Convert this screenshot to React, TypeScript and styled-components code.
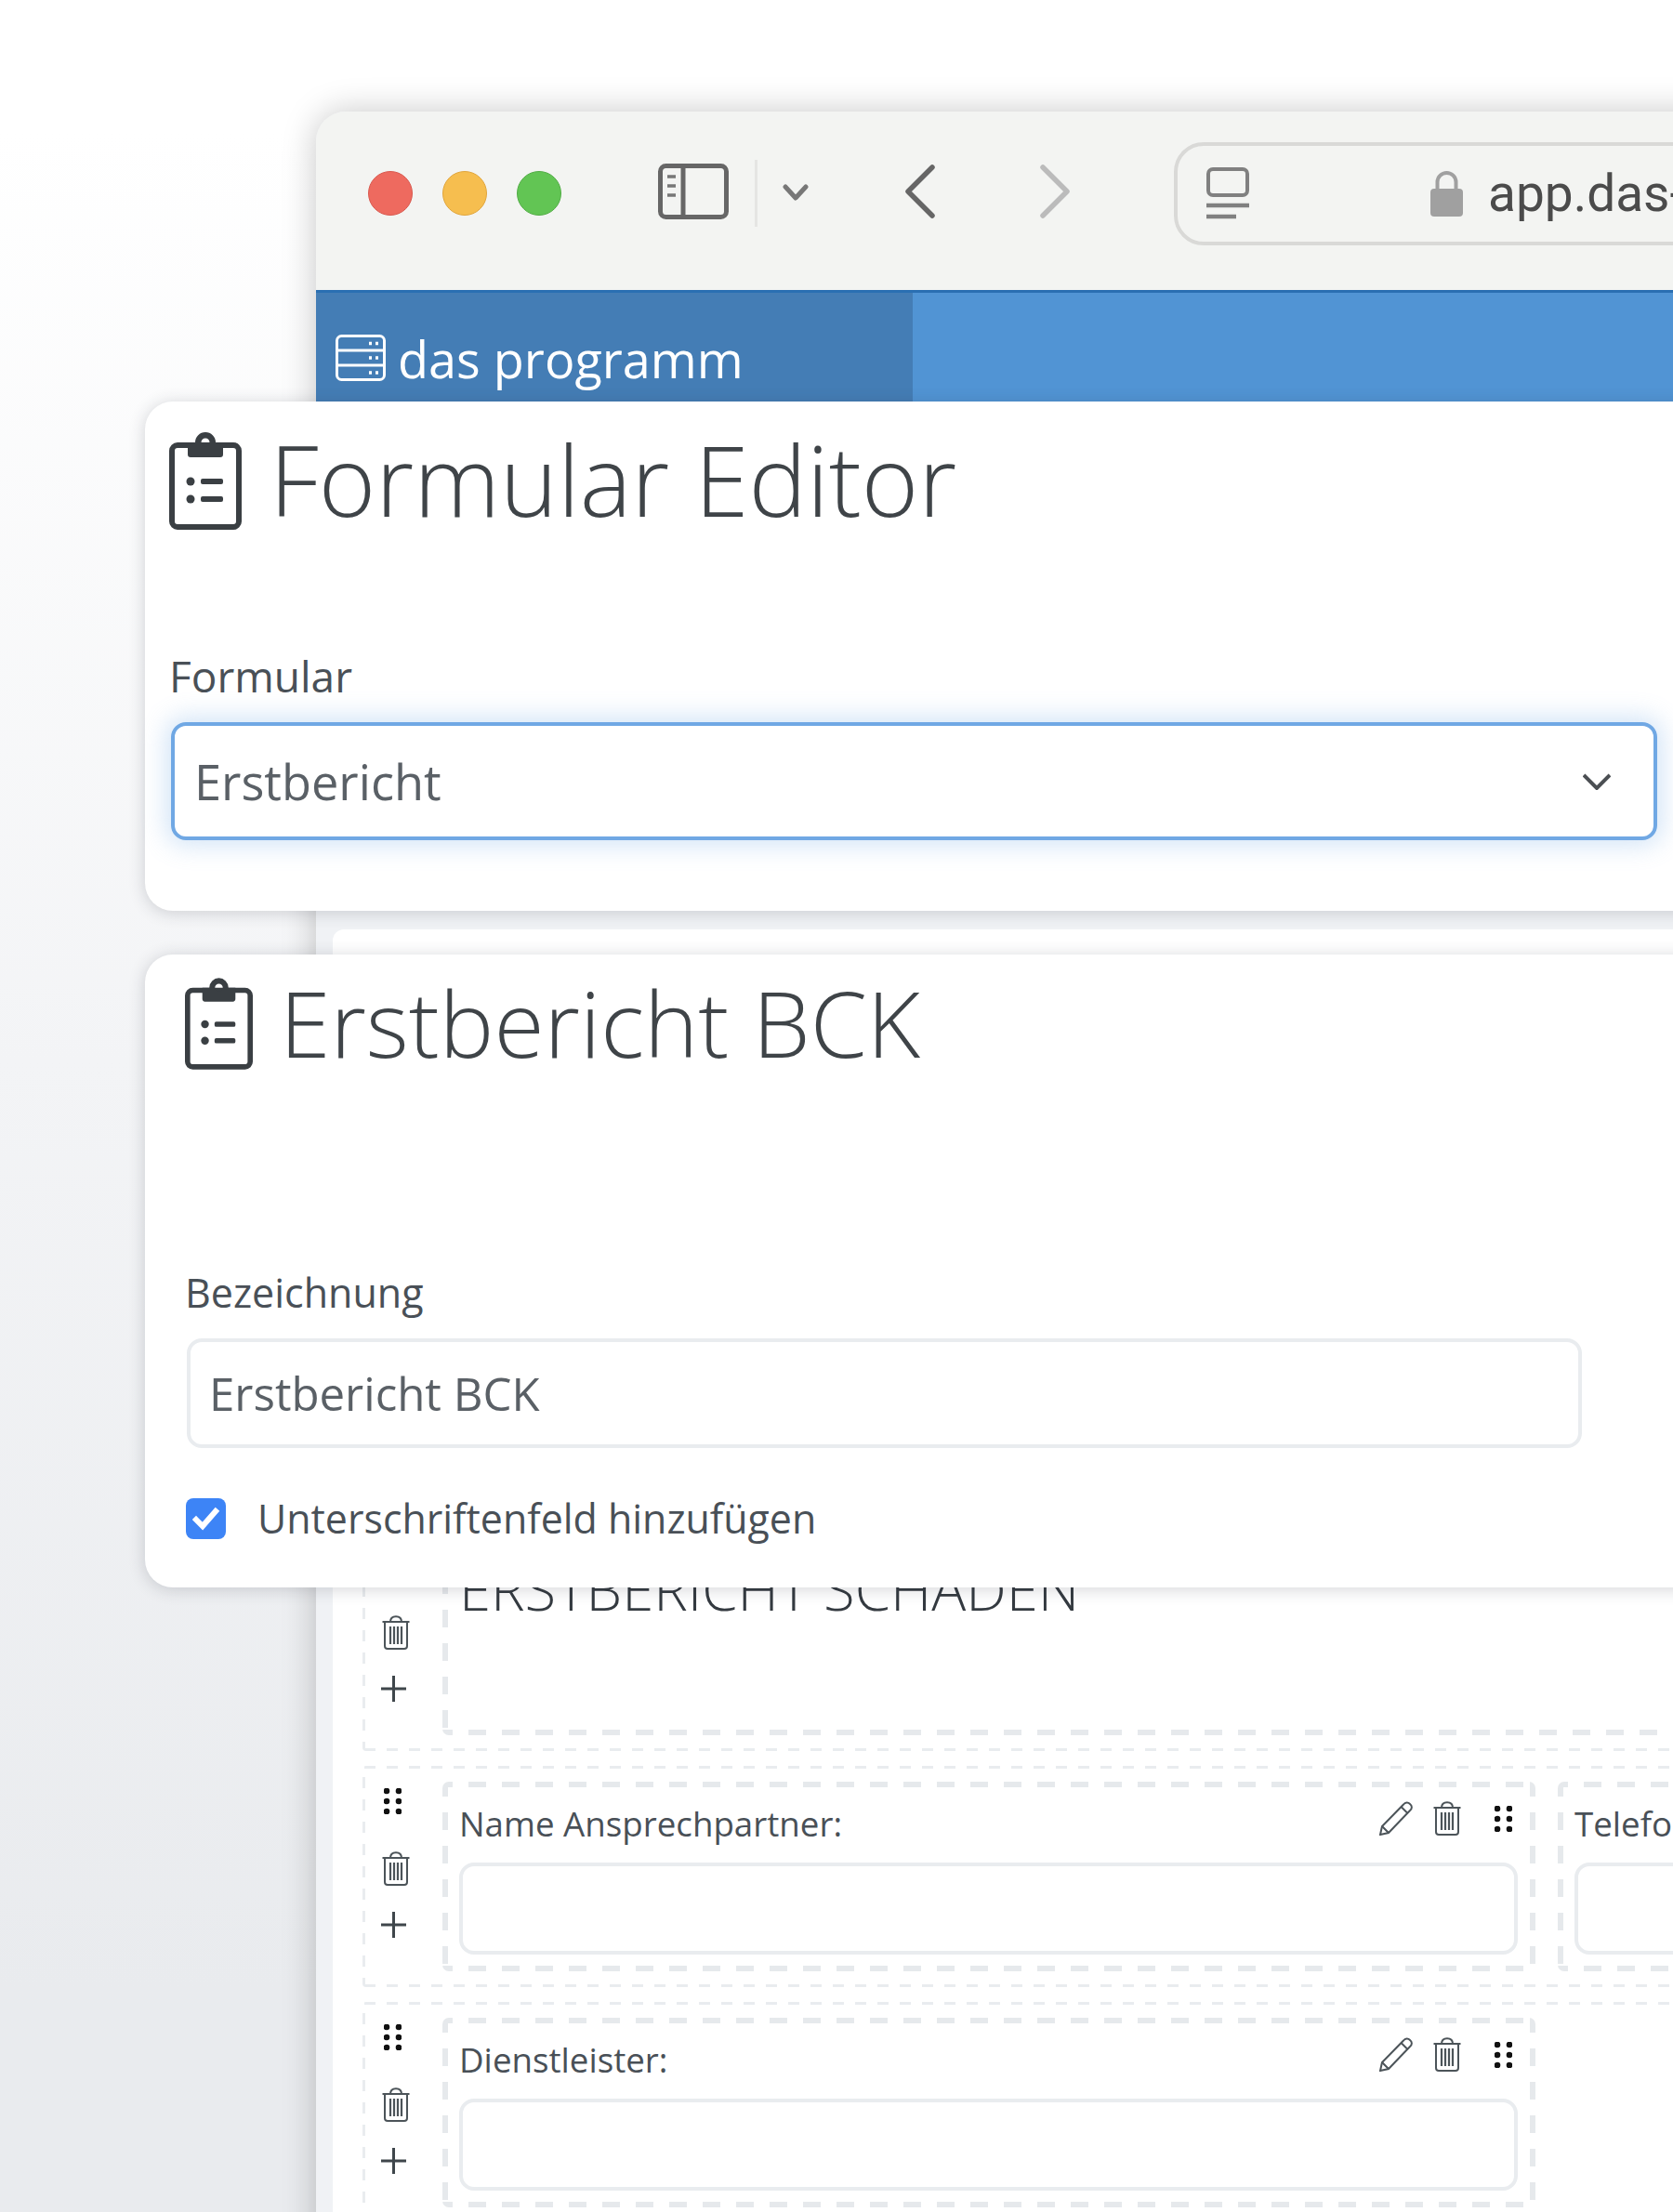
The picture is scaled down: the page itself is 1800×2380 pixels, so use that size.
import React from "react";
import styled, { createGlobalStyle } from "styled-components";

const Global = createGlobalStyle`
  html, body { margin: 0; padding: 0; background: #fff; }
  * { box-sizing: border-box; }
  body { font-family: "Open Sans", "Liberation Sans", sans-serif; }
`;

const dashes = (color: string, w: number, dash: number, period: number, offset: number) => `
  background-image:
    repeating-linear-gradient(90deg, ${color} 0 ${dash}px, transparent ${dash}px ${period}px),
    repeating-linear-gradient(90deg, ${color} 0 ${dash}px, transparent ${dash}px ${period}px),
    repeating-linear-gradient(0deg, ${color} 0 ${dash}px, transparent ${dash}px ${period}px),
    repeating-linear-gradient(0deg, ${color} 0 ${dash}px, transparent ${dash}px ${period}px);
  background-size: 100% ${w}px, 100% ${w}px, ${w}px 100%, ${w}px 100%;
  background-position: ${offset}px 0, ${offset}px 100%, 0 ${offset}px, 100% ${offset}px;
  background-repeat: no-repeat;
`;

const Stage = styled.div`
  position: relative;
  width: 1800px;
  height: 2380px;
  overflow: hidden;
  padding: 120px 0 0 340px;
  background: linear-gradient(180deg, #ffffff 0%, #ffffff 6%, #f3f4f6 48%, #e9ebee 90%, #e9ebee 100%);
`;

const Win = styled.div`
  width: 1600px;
  height: 2300px;
  border-radius: 32px 0 0 0;
  background: #f0f2f5;
  box-shadow: 0 0 36px rgba(0, 0, 0, 0.22);
  overflow: hidden;
`;

const Toolbar = styled.div`
  height: 192px;
  display: flex;
  align-items: center;
  padding: 0 0 16px 56px;
  background: #f3f4f2;
`;

const Lights = styled.div`
  display: flex;
  gap: 32px;
`;

const Light = styled.span<{ $c: string; $b: string }>`
  width: 48px;
  height: 48px;
  border-radius: 50%;
  background: ${(p) => p.$c};
  border: 1px solid ${(p) => p.$b};
`;

const ToolIcon = styled.svg<{ $ml: number; $mt?: number }>`
  flex: none;
  margin-left: ${(p) => p.$ml}px;
  margin-top: ${(p) => p.$mt ?? 0}px;
`;

const ToolDivider = styled.span`
  flex: none;
  width: 3px;
  height: 72px;
  margin-left: 28px;
  background: #e5e5e3;
`;

const Address = styled.div`
  flex: none;
  width: 900px;
  height: 111px;
  margin-left: 112px;
  padding-left: 31px;
  display: flex;
  align-items: center;
  border: 4px solid #d9d9d7;
  border-radius: 32px;
`;

const ReaderIcon = styled.svg`
  flex: none;
`;

const LockIcon = styled.svg`
  flex: none;
  margin-left: 195px;
`;

const UrlText = styled.span`
  margin-left: 27px;
  font-family: Roboto, "Liberation Sans", sans-serif;
  font-size: 55px;
  line-height: 60px;
  color: #4b4b4b;
  white-space: nowrap;
`;

const NavBar = styled.div`
  height: 120px;
  display: flex;
  background: #5194d4;
  border-top: 3px solid #2a6fb2;
`;

const Brand = styled.div`
  width: 642px;
  height: 100%;
  display: flex;
  align-items: flex-start;
  gap: 13px;
  padding: 45px 0 0 21px;
  background: #447db5;
`;

const ServerIcon = styled.svg`
  flex: none;
`;

const BrandText = styled.span`
  font-weight: 400;
  font-size: 54px;
  line-height: 62px;
  margin-top: -5px;
  color: #fff;
  white-space: nowrap;
`;

const Panel = styled.div`
  margin: 568px 0 0 18px;
  padding: 646px 0 0 32px;
  height: 1500px;
  background: #fff;
  border-radius: 12px 0 0 0;
  display: flex;
  flex-direction: column;
  gap: 16px;
`;

const Row = styled.div`
  height: 238px;
  display: flex;
  border-radius: 4px;
  ${dashes("#e9ecef", 3, 12, 24, 2)}
`;

const RowTools = styled.div`
  flex: none;
  width: 86px;
  padding: 24px 0 0 20px;
  display: flex;
  flex-direction: column;
  align-items: flex-start;
`;

const Grip = styled.svg<{ $ml?: number }>`
  flex: none;
  margin-left: ${(p) => p.$ml ?? 0}px;
`;

const RowTrash = styled.svg`
  margin: 40px 0 0 1px;
  flex: none;
`;

const RowPlus = styled.svg`
  margin-top: 28px;
  flex: none;
`;

const Fields = styled.div`
  display: flex;
  gap: 24px;
  padding-top: 17px;
`;

const Field = styled.div<{ $w: number }>`
  flex: none;
  width: ${(p) => p.$w}px;
  height: 204px;
  padding: 21px 19px 17px 18px;
  border-radius: 7px;
  ${dashes("#e6e9ec", 6, 19, 36, -8)}
`;

const FieldHead = styled.div`
  height: 37px;
  margin-bottom: 29px;
  display: flex;
  align-items: center;
`;

const FieldLabel = styled.span`
  flex: 1;
  font-size: 36.7px;
  line-height: 37px;
  margin-top: 11px;
  color: #495057;
  white-space: nowrap;
`;

const HeadIcon = styled.svg<{ $ml: number }>`
  flex: none;
  margin-left: ${(p) => p.$ml}px;
`;

const FieldPad = styled.span`
  flex: none;
  width: 6px;
`;

const Heading = styled.div`
  margin-top: -10px;
  font-weight: 300;
  font-size: 61.6px;
  line-height: 70px;
  color: #343a40;
  white-space: nowrap;
`;

const Box = styled.input`
  display: block;
  width: 100%;
  height: 99px;
  padding: 0 16px;
  border: 4px solid #e9ecef;
  border-radius: 16px;
  background: #fff;
  outline: none;
  font-family: inherit;
`;

const FloatCard = styled.section<{ $top: number; $h: number }>`
  position: absolute;
  left: 156px;
  top: ${(p) => p.$top}px;
  width: 1700px;
  height: ${(p) => p.$h}px;
  background: #fff;
  border-radius: 30px;
  box-shadow: 0 2px 18px rgba(40, 44, 60, 0.2);
`;

const CardTop = styled.header<{ $pl: number; $pt: number; $gap: number; $h: number }>`
  height: ${(p) => p.$h}px;
  padding: ${(p) => p.$pt}px 0 0 ${(p) => p.$pl}px;
  display: flex;
  align-items: flex-start;
  gap: ${(p) => p.$gap}px;
`;

const CardTitle = styled.h1<{ $size: number; $mt: number }>`
  margin: ${(p) => p.$mt}px 0 0;
  font-weight: 300;
  font-size: ${(p) => p.$size}px;
  line-height: 1.2;
  color: #3f4448;
  white-space: nowrap;
`;

const FormGroup = styled.div<{ $pl: number; $w: number }>`
  padding-left: ${(p) => p.$pl}px;
  width: ${(p) => p.$w}px;
`;

const Label = styled.label<{ $size: number; $mb: number }>`
  display: block;
  margin: -1px 0 ${(p) => p.$mb + 1}px -2px;
  font-size: ${(p) => p.$size}px;
  line-height: 60px;
  color: #495057;
`;

const SelectBox = styled.div`
  height: 127px;
  display: flex;
  align-items: center;
  justify-content: space-between;
  padding: 0 46px 0 21px;
  border: 4px solid #70a8e4;
  border-radius: 16px;
  font-size: 52.3px;
  color: #5a6066;
  box-shadow: 0 0 26px 6px rgba(112, 168, 228, 0.3);
`;

const TextInput = styled.input`
  display: block;
  width: 100%;
  height: 118px;
  padding: 0 20px 2px;
  border: 4px solid #e9ecef;
  border-radius: 16px;
  outline: none;
  background: #fff;
  font-family: inherit;
  font-size: 49.2px;
  color: #5a6066;
`;

const CheckRow = styled.div`
  margin: 54px 0 0 44px;
  display: flex;
  align-items: center;
  gap: 34px;
`;

const CheckMark = styled.span`
  flex: none;
  width: 43px;
  height: 44px;
  border-radius: 8px;
  background: #3d84f6;
  display: flex;
  align-items: center;
  justify-content: center;
`;

const CheckText = styled.span`
  font-size: 42.9px;
  line-height: 44px;
  color: #495057;
  white-space: nowrap;
`;

const ClipboardSvg = styled.svg`
  flex: none;
`;

const Clipboard = ({ w, h }: { w: number; h: number }) => (
  <ClipboardSvg width={w} height={h} viewBox="0 0 78 105" fill="none">
    <rect x="3" y="14" width="72" height="88" rx="6" stroke="#3a3f43" strokeWidth="6" />
    <path
      fillRule="evenodd"
      fill="#3a3f43"
      d="M20 11H28a11 11 0 0 1 22 0H58V24a3 3 0 0 1-3 3H23a3 3 0 0 1-3-3zM39 6.5a4.5 4.5 0 1 0 0 9 4.5 4.5 0 0 0 0-9z"
    />
    <circle cx="23" cy="53" r="4.5" fill="#3a3f43" />
    <circle cx="23" cy="72" r="4.5" fill="#3a3f43" />
    <rect x="34" y="50" width="24" height="6" rx="2" fill="#3a3f43" />
    <rect x="34" y="69" width="24" height="6" rx="2" fill="#3a3f43" />
  </ClipboardSvg>
);

const gripDots = [3, 14, 25].flatMap((y) =>
  [3, 16].map((x) => <circle key={`${x}-${y}`} cx={x} cy={y} r="3.3" />),
);

const trashParts = (
  <g fill="none" stroke="#4c5459" strokeWidth="2">
    <path d="M0.5 7H29.5" />
    <path d="M9 7C9 3 11 1.2 15 1.2S21 3 21 7" />
    <path d="M3 7V33C3 35 4 36 6 36H24C26 36 27 35 27 33V7" />
    <path d="M9 12V31M13 12V31M17 12V31M21 12V31" strokeWidth="2.2" />
  </g>
);

const Plus = () => (
  <RowPlus width="27" height="28" viewBox="0 0 27 28" fill="none" stroke="#3f464b" strokeWidth="3">
    <path d="M0 14H27M13.5 0V28" />
  </RowPlus>
);

const Tools = () => (
  <RowTools>
    <Grip $ml={3} width="19" height="28" viewBox="0 0 19 28" fill="#111">{gripDots}</Grip>
    <RowTrash width="30" height="37" viewBox="0 0 30 37">{trashParts}</RowTrash>
    <Plus />
  </RowTools>
);

const InputField = ({ label, w, noIcons }: { label: string; w: number; noIcons?: boolean }) => (
  <Field $w={w}>
    <FieldHead>
      <FieldLabel>{label}</FieldLabel>
      {!noIcons && (
        <>
          <HeadIcon $ml={0} width="36" height="37" viewBox="0 0 36 37" fill="none" stroke="#4c5459" strokeWidth="2">
            <path d="M1 36L3 27L26 3.5C28 1 31 1 33 3C35.5 5 35.5 8 33 10L10 34Z" />
            <path d="M23.5 6L30.5 13M3 27L10 34" />
          </HeadIcon>
          <HeadIcon $ml={22} width="30" height="37" viewBox="0 0 30 37">{trashParts}</HeadIcon>
          <HeadIcon $ml={36} width="19" height="28" viewBox="0 0 19 28" fill="#111">{gripDots}</HeadIcon>
          <FieldPad />
        </>
      )}
    </FieldHead>
    <Box readOnly aria-label={label} />
  </Field>
);

export default function App() {
  return (
    <Stage>
      <Global />
      <Win>
        <Toolbar>
          <Lights>
            <Light $c="#ee6a5f" $b="#d9594f" />
            <Light $c="#f6be4f" $b="#e0a53c" />
            <Light $c="#62c554" $b="#52ad46" />
          </Lights>
          <ToolIcon $ml={104} $mt={-4} width="76" height="60" viewBox="0 0 76 60" fill="none" stroke="#666" strokeWidth="5">
            <rect x="2.5" y="2.5" width="71" height="55" rx="6" />
            <path d="M27 2V58" />
            <path d="M10 14H19M10 24H19M10 34H19" strokeWidth="3.5" stroke="#777" />
          </ToolIcon>
          <ToolDivider />
          <ToolIcon $ml={27} $mt={-2} width="28" height="18" viewBox="0 0 28 18" fill="none" stroke="#777" strokeWidth="5" strokeLinecap="round" strokeLinejoin="round">
            <path d="M3 3L14 15L25 3" />
          </ToolIcon>
          <ToolIcon $ml={104} $mt={-5} width="32" height="58" viewBox="0 0 32 58" fill="none" stroke="#666" strokeWidth="5.5" strokeLinecap="round" strokeLinejoin="round">
            <path d="M29 3L3 29L29 55" />
          </ToolIcon>
          <ToolIcon $ml={113} $mt={-5} width="32" height="58" viewBox="0 0 32 58" fill="none" stroke="#bbb" strokeWidth="5.5" strokeLinecap="round" strokeLinejoin="round">
            <path d="M3 3L29 29L3 55" />
          </ToolIcon>
          <Address>
            <ReaderIcon width="46" height="56" viewBox="0 0 46 56" fill="none" stroke="#808080" strokeWidth="4">
              <rect x="2" y="2" width="42" height="28" rx="5" />
              <path d="M0 41H46" strokeWidth="4.5" />
              <path d="M0 53H32" strokeWidth="4.5" />
            </ReaderIcon>
            <LockIcon width="35" height="50" viewBox="0 0 35 50">
              <path d="M7.5 22V13a10 10 0 0 1 20 0v9" fill="none" stroke="#a0a0a0" strokeWidth="4" />
              <rect x="0" y="20" width="35" height="30" rx="4" fill="#a0a0a0" />
            </LockIcon>
            <UrlText>app.das-programm.de</UrlText>
          </Address>
        </Toolbar>
        <NavBar>
          <Brand>
            <ServerIcon width="54" height="50" viewBox="0 0 54 50" fill="none" stroke="#fff" strokeWidth="3">
              <rect x="1.5" y="1.5" width="51" height="47" rx="5" />
              <path d="M1.5 17H52.5M1.5 33H52.5" />
              <path d="M36 9.5H39M43 9.5H46M36 25H39M43 25H46M36 41H39M43 41H46" strokeWidth="3.4" />
            </ServerIcon>
            <BrandText>das programm</BrandText>
          </Brand>
        </NavBar>
        <Panel>
          <Row>
            <Tools />
            <Fields>
              <Field $w={1400}>
                <Heading>ERSTBERICHT SCHADEN</Heading>
              </Field>
            </Fields>
          </Row>
          <Row>
            <Tools />
            <Fields>
              <InputField label="Name Ansprechpartner:" w={1176} />
              <InputField label="Telefon:" w={400} noIcons />
            </Fields>
          </Row>
          <Row>
            <Tools />
            <Fields>
              <InputField label="Dienstleister:" w={1176} />
            </Fields>
          </Row>
        </Panel>
      </Win>

      <FloatCard $top={432} $h={548}>
        <CardTop $h={266} $pl={26} $pt={33} $gap={30}>
          <Clipboard w={78} h={105} />
          <CardTitle $size={105} $mt={-12}>Formular Editor</CardTitle>
        </CardTop>
        <FormGroup $pl={28} $w={1627}>
          <Label $size={46} $mb={19}>Formular</Label>
          <SelectBox>
            Erstbericht
            <svg width="30" height="18" viewBox="0 0 30 18" fill="none" stroke="#4b4f53" strokeWidth="4">
              <path d="M1 2L15 16L29 2" />
            </svg>
          </SelectBox>
        </FormGroup>
      </FloatCard>

      <FloatCard $top={1027} $h={681}>
        <CardTop $h={335} $pl={43} $pt={25} $gap={29}>
          <Clipboard w={73} h={99} />
          <CardTitle $size={98.6} $mt={-11}>Erstbericht BCK</CardTitle>
        </CardTop>
        <FormGroup $pl={45} $w={1546}>
          <Label $size={43} $mb={18}>Bezeichnung</Label>
          <TextInput readOnly value="Erstbericht BCK" />
        </FormGroup>
        <CheckRow>
          <CheckMark>
            <svg width="30" height="26" viewBox="0 0 30 26" fill="none" stroke="#fff" strokeWidth="6" strokeLinecap="square">
              <path d="M4 14L11 21L25 5" />
            </svg>
          </CheckMark>
          <CheckText>Unterschriftenfeld hinzufügen</CheckText>
        </CheckRow>
      </FloatCard>
    </Stage>
  );
}
